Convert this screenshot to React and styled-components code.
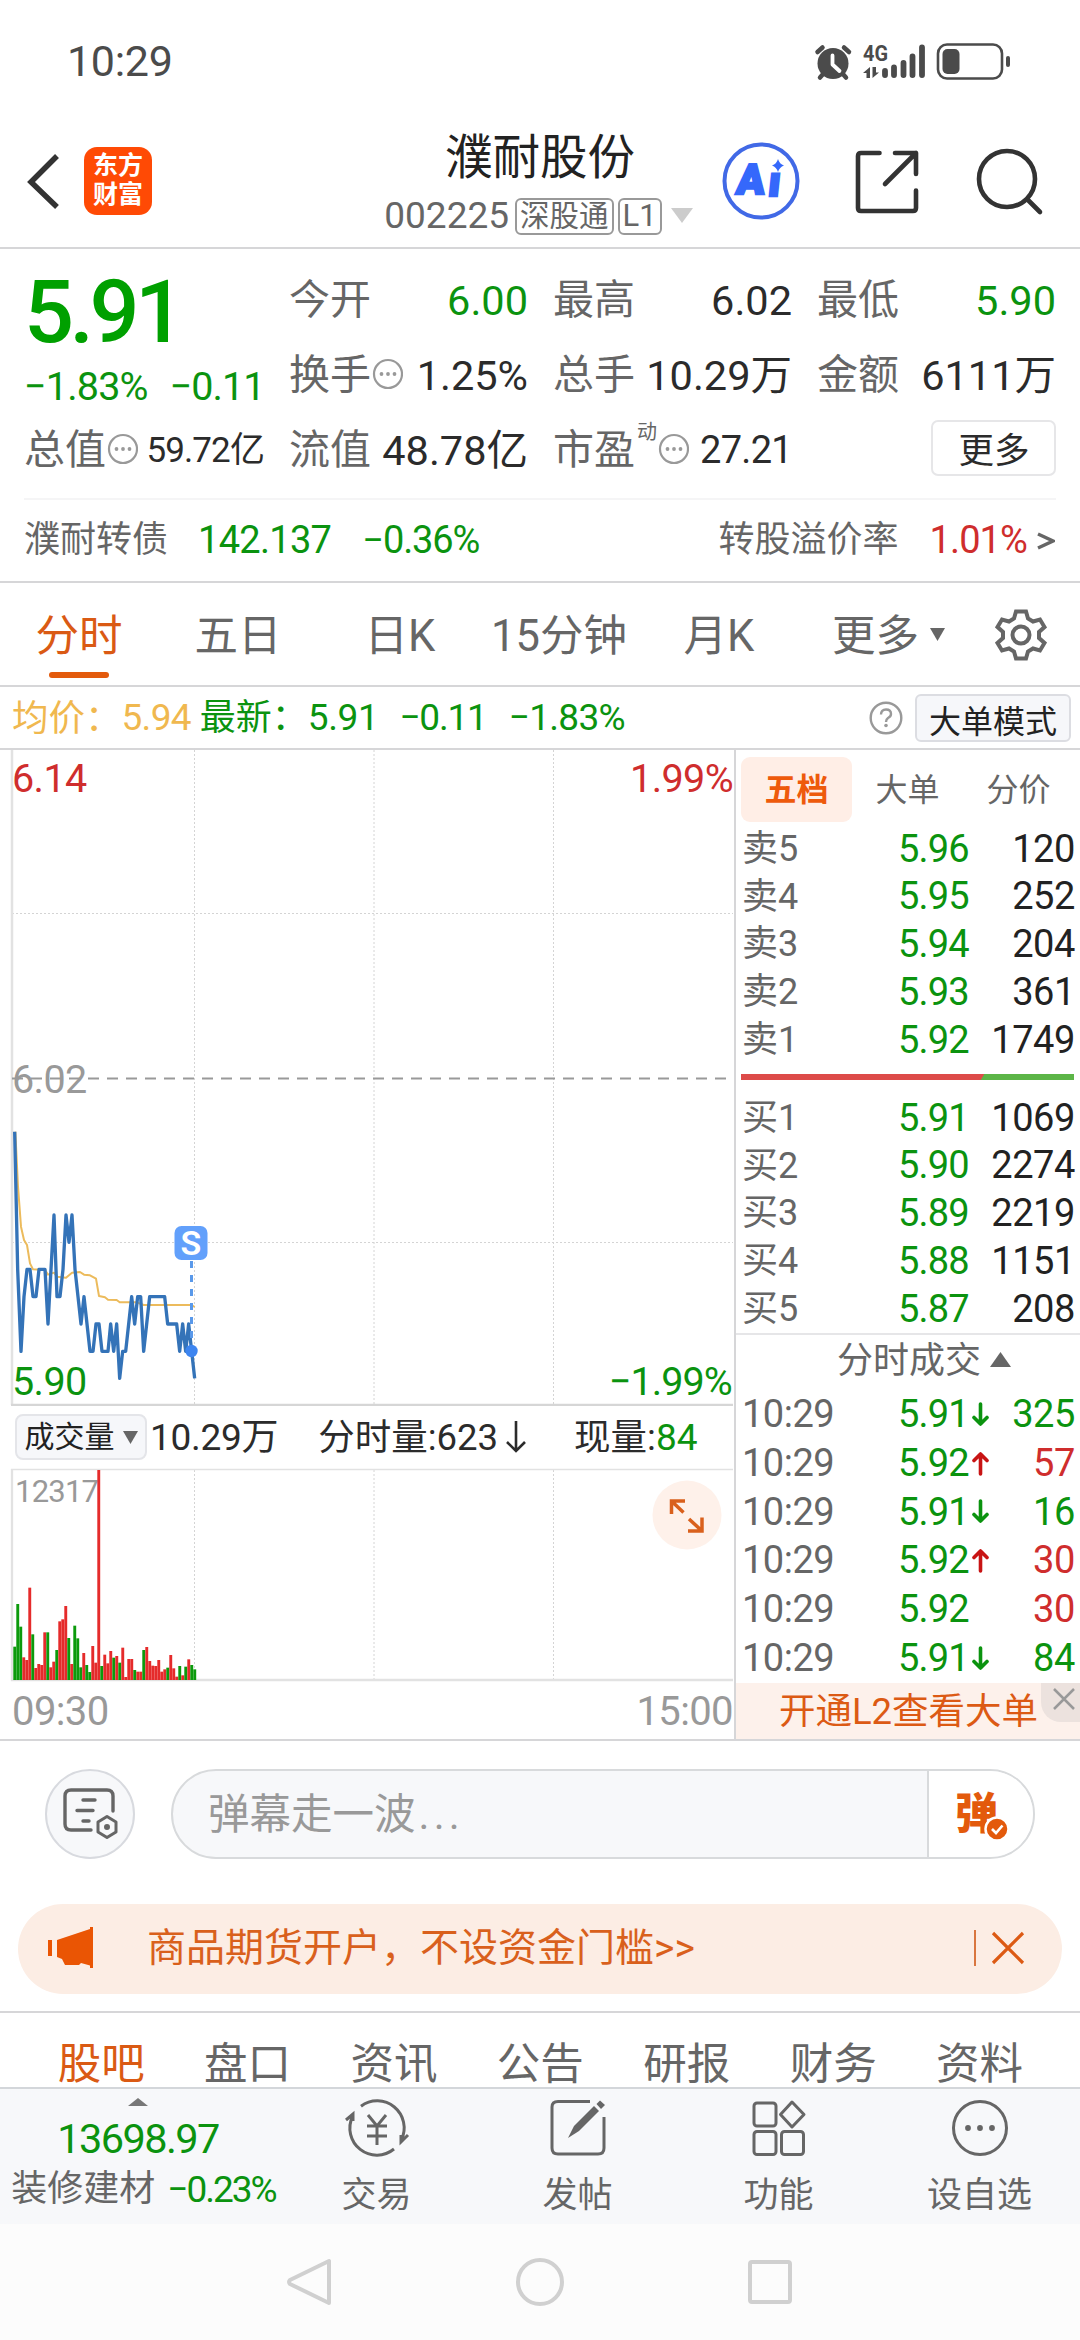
import React from 'react';
import styled, { createGlobalStyle } from 'styled-components';

const GREEN = '#0b930f';
const RED = '#cf2d2d';
const ORANGE = '#e35a0c';
const DARK = '#2b2b2b';
const GRAY = '#666';
const LINE = '#d6d6d8';

const GlobalStyle = createGlobalStyle`
  * { box-sizing: border-box; }
  body {
    margin: 0;
    background: #fff;
    font-family: Roboto, "Noto Sans CJK SC", sans-serif;
    color: ${DARK};
  }
  svg { display: block; flex: none; }
`;

const Page = styled.div`
  width: 1080px;
  height: 2340px;
  display: flex;
  flex-direction: column;
  overflow: hidden;
  background: #fff;
`;

const Txt = styled.span`
  font-size: ${p => p.$size || 38}px;
  color: ${p => p.$color || DARK};
  font-weight: ${p => p.$weight || 400};
  letter-spacing: ${p => p.$ls || 0}px;
  margin-left: ${p => p.$ml || 0}px;
  line-height: 1.2;
  white-space: pre;
`;

/* ---------- status bar ---------- */
const StatusBar = styled.div`
  height: 120px;
  flex: none;
  display: flex;
  justify-content: space-between;
  align-items: center;
  padding: 3px 67px 0 67px;
`;

function StatusIcons() {
  return (
    <svg width="202" height="44" viewBox="810 38 202 44">
      <g stroke="#4b4b4b" strokeWidth="4.500" strokeLinecap="round">
        <path d="M816.500 50l5-4.500M848 50l-5-4.500M823 71l-4 4.500M841 71l4 4.500" />
      </g>
      <circle cx="832" cy="61.500" r="15.500" fill="#4b4b4b" />
      <path d="M831.500 53.500v9l7 6.500" stroke="#fff" strokeWidth="3.800" fill="none" strokeLinecap="round" strokeLinejoin="round" />
      <text x="862" y="59" fontSize="22.500" fontWeight="700" fill="#4b4b4b" textLength="25" lengthAdjust="spacingAndGlyphs">4G</text>
      <path d="M862 71L869 65V76H865.500V71ZM871.500 65H875V70.500H878L871.500 76Z" fill="#4b4b4b" />
      <g stroke="#4b4b4b" strokeWidth="5.800" strokeLinecap="round">
        <path d="M884 69v4M893 65.500v7.500M902.500 61v12M911.500 54.500v18.500M921 45.500v27.500" />
      </g>
      <rect x="937" y="42.500" width="64" height="34" rx="9" fill="none" stroke="#4b4b4b" strokeWidth="2.600" />
      <rect x="941.500" y="47" width="17" height="25" rx="5" fill="#4b4b4b" />
      <rect x="1005" y="54" width="4" height="11" rx="2" fill="#4b4b4b" />
    </svg>
  );
}

/* ---------- header ---------- */
const Header = styled.header`
  height: 129px;
  flex: none;
  display: grid;
  grid-template-columns: 380px 320px 1fr;
  border-bottom: 2px solid ${LINE};
`;
const HeaderLeft = styled.div`
  display: flex;
  align-items: flex-start;
  gap: 23px;
  padding: 27px 0 0 26px;
`;
const Logo = styled.div`
  width: 68px;
  height: 68px;
  border-radius: 13px;
  background: #ff4a05;
  color: #fff;
  font-size: 25px;
  font-weight: 700;
  line-height: 29px;
  text-align: center;
  padding-top: 4px;
`;
const HeaderTitle = styled.div`
  display: flex;
  flex-direction: column;
  align-items: center;
`;
const Name = styled.h1`
  margin: 10px 0 0;
  font-size: 47.500px;
  line-height: 56px;
  font-weight: 400;
  color: #222;
`;
const CodeRow = styled.div`
  display: flex;
  align-items: center;
  height: 38px;
  margin-top: 11px;
`;
const Tag = styled.span`
  height: 37px;
  border: 2px solid #999;
  border-radius: 6px;
  color: ${GRAY};
  font-size: ${p => p.$size}px;
  line-height: 32px;
  padding: 0 3px;
  margin-left: ${p => p.$ml}px;
  white-space: nowrap;
`;
const HeaderRight = styled.div`
  display: flex;
  align-items: center;
  padding: 0 0 5px 22px;
  gap: 54px;
`;

/* ---------- quote ---------- */
const Quote = styled.section`
  height: 334px;
  flex: none;
  padding: 14px 24px 0;
  border-bottom: 2px solid ${LINE};
`;
const QuoteGrid = styled.div`
  display: flex;
  gap: 25px;
  height: 225px;
`;
const PriceCol = styled.div`
  width: 240px;
  flex: none;
`;
const PriceLine = styled.div`
  display: flex;
  align-items: center;
  height: ${p => p.$h}px;
`;
const Stats = styled.div`
  flex: 1;
  display: grid;
  grid-template-columns: repeat(3, 1fr);
  grid-auto-rows: 75px;
  column-gap: 25px;
`;
const Stat = styled.div`
  height: 75px;
  display: flex;
  align-items: center;
  justify-content: space-between;
  white-space: nowrap;
`;
const StatLabel = styled.span`
  display: flex;
  align-items: center;
  font-size: 41px;
  line-height: 1.2;
  color: ${GRAY};
  & > svg { margin-top: -4px; }
`;
const Sup = styled.sup`
  font-size: 20px;
  line-height: 20px;
  align-self: flex-start;
  margin: -4px 0 0 2px;
  width: 20px;
`;
const MoreButton = styled.button`
  justify-self: end;
  width: 125px;
  height: 56px;
  margin-top: 7px;
  border: 2px solid #e6e6e8;
  border-radius: 7px;
  background: #fff;
  padding: 0 0 6px 1px;
  font: 400 35.500px Roboto, "Noto Sans CJK SC", sans-serif;
  color: ${DARK};
`;
const BondRow = styled.div`
  margin-top: 10px;
  height: 84px;
  border-top: 2px solid #f5f5f6;
  display: flex;
  align-items: center;
  padding: 0 1px 1px 0;
`;
const Spacer = styled.div`
  flex: 1;
`;

function Dots() {
  return (
    <svg width="32" height="32" viewBox="0 0 32 32">
      <circle cx="17" cy="16" r="14" fill="none" stroke="#999" strokeWidth="2.200" />
      <g fill="#999">
        <circle cx="10.500" cy="16" r="1.900" />
        <circle cx="17" cy="16" r="1.900" />
        <circle cx="23.500" cy="16" r="1.900" />
      </g>
    </svg>
  );
}

/* ---------- period tabs ---------- */
const PeriodTabs = styled.nav`
  height: 104px;
  flex: none;
  display: grid;
  grid-template-columns: 158px 160px 164px 154px 166px 173px 1fr;
  border-bottom: 2px solid ${LINE};
`;
const Period = styled.div`
  position: relative;
  display: flex;
  align-items: center;
  justify-content: center;
  gap: 11px;
  font-size: 43.500px;
  line-height: 1;
  padding-top: 5px;
  white-space: nowrap;
  color: ${p => (p.$on ? '#da5a14' : GRAY)};
  & > svg { margin-top: -4px; }
  &::after {
    content: '';
    display: ${p => (p.$on ? 'block' : 'none')};
    position: absolute;
    left: 49px;
    bottom: 7px;
    width: 60px;
    height: 6px;
    border-radius: 3px;
    background: ${ORANGE};
  }
`;

/* ---------- info row ---------- */
const InfoRow = styled.div`
  height: 63px;
  flex: none;
  display: flex;
  align-items: center;
  padding: 0 9px 0 12px;
  border-bottom: 2px solid ${LINE};
  & > span { padding-top: 2px; }
`;
const ModeButton = styled.button`
  width: 156px;
  height: 48px;
  margin-left: 12px;
  border: 2px solid #dcdde2;
  border-radius: 6px;
  background: #f6f7fa;
  padding: 0 0 6px;
  font: 400 32px Roboto, "Noto Sans CJK SC", sans-serif;
  color: #222;
`;

/* ---------- chart and book ---------- */
const Market = styled.section`
  height: 991px;
  flex: none;
  display: flex;
  border-bottom: 2px solid ${LINE};
`;
const ChartCol = styled.div`
  width: 734px;
  flex: none;
`;
const VolumeHead = styled.div`
  height: 62px;
  display: flex;
  align-items: center;
  padding-left: 15px;
  & > span { padding-top: 2px; }
`;
const VolumeSelect = styled.div`
  width: 132px;
  height: 46px;
  display: flex;
  align-items: center;
  justify-content: center;
  gap: 8px;
  border: 2px solid #e4e5e9;
  border-radius: 8px;
  background: #f6f7fa;
  font-size: 30px;
  line-height: 1;
  color: #222;
`;
const Book = styled.aside`
  flex: 1;
  border-left: 2px solid ${LINE};
  display: flex;
  flex-direction: column;
`;
const BookTabs = styled.div`
  display: grid;
  grid-template-columns: repeat(3, 111px);
  height: 65px;
  margin: 7px 0 3px 5px;
`;
const BookTab = styled.div`
  display: flex;
  align-items: center;
  justify-content: center;
  border-radius: 9px;
  font-size: 32px;
  line-height: 1;
  padding-top: 1px;
  color: ${p => (p.$on ? '#ee5a0c' : GRAY)};
  font-weight: ${p => (p.$on ? 700 : 400)};
  background: ${p => (p.$on ? '#ffeee6' : 'none')};
`;
const BookRow = styled.div`
  display: grid;
  grid-template-columns: 156px 76px 1fr;
  align-items: center;
  height: ${p => p.$h}px;
  padding: 1px 5px 0 6px;
  & > :last-child { text-align: right; }
`;
const Ratio = styled.div`
  height: 6px;
  margin: ${p => p.$m};
  background: linear-gradient(120deg, #dd4b49 72.200%, #5cb547 72.400%);
`;
const TradesHead = styled.div`
  height: 57px;
  border-top: 2px solid #e6e6e8;
  display: flex;
  align-items: center;
  justify-content: center;
  gap: 9px;
  padding: 0 0 1px 32px;
  & > svg { margin-top: -5px; }
`;
const TickPrice = styled.div`
  display: flex;
  align-items: center;
  gap: 3px;
`;
const L2Banner = styled.div`
  position: relative;
  flex: 1;
  display: flex;
  align-items: center;
  justify-content: center;
  background: #fdf1eb;
  padding: 2px 0 0 1px;
`;
const L2Close = styled.div`
  position: absolute;
  top: 0;
  right: 0;
  width: 39px;
  height: 39px;
  border-bottom-left-radius: 20px;
  background: #ece2de;
  display: flex;
  align-items: center;
  justify-content: center;
  padding: 0 0 7px 6px;
`;

/* ---------- comment, banner ---------- */
const CommentRow = styled.div`
  height: 163px;
  flex: none;
  display: flex;
  padding: 28px 45px 0;
  gap: 36px;
`;
const RoundButton = styled.div`
  width: 90px;
  height: 90px;
  border-radius: 50%;
  border: 2px solid #d8dadf;
  background: #f7f8fa;
  display: flex;
  align-items: center;
  justify-content: center;
`;
const Input = styled.div`
  flex: 1;
  height: 90px;
  display: flex;
  align-items: center;
  border: 2px solid #d8dadc;
  border-radius: 45px;
  background: #f7f8fa;
  overflow: hidden;
  padding-left: 35px;
  & > span { padding-top: 2px; }
`;
const Danmu = styled.div`
  width: 106px;
  height: 100%;
  background: #fff;
  border-left: 2px solid #d8dadc;
  display: flex;
  align-items: center;
  padding-left: 26px;
`;
const Promo = styled.div`
  height: 90px;
  flex: none;
  margin: 0 18px 17px;
  border-radius: 45px;
  background: #fcede4;
  display: flex;
  align-items: center;
  padding: 0 37px 2px 29px;
`;
const Bar = styled.i`
  width: 2px;
  height: 36px;
  background: #d9763f;
  margin-right: 15px;
`;

/* ---------- bottom ---------- */
const Sections = styled.nav`
  height: 78px;
  flex: none;
  display: grid;
  grid-template-columns: repeat(7, 146.400px);
  padding-left: 28px;
  border-top: 2px solid ${LINE};
  border-bottom: 2px solid #d3d6da;
`;
const Section = styled.div`
  text-align: center;
  font-size: 43.500px;
  line-height: 48px;
  padding-top: 28px;
  height: 76px;
  color: ${p => (p.$on ? '#da5a14' : GRAY)};
`;
const Toolbar = styled.div`
  height: 135px;
  flex: none;
  display: grid;
  grid-template-columns: 276px repeat(4, 201px);
  background: #f7f8fa;
`;
const IndexBox = styled.div`
  display: flex;
  flex-direction: column;
  align-items: center;
  padding: 9px 0 0;
`;
const IndexLine = styled.div`
  display: flex;
  align-items: center;
  white-space: nowrap;
  padding-left: ${p => p.$pl || 0}px;
  height: ${p => p.$h}px;
`;
const Tool = styled.div`
  display: flex;
  flex-direction: column;
  align-items: center;
  padding-top: 9px;
  font-size: 35px;
  line-height: 42px;
  color: ${GRAY};
  & > svg { margin-bottom: 17px; }
`;
const NavBar = styled.div`
  flex: 1;
  display: flex;
  justify-content: center;
  gap: 180px;
  padding-top: 32px;
  background: #fcfcfc;
`;

const asks = [['卖5', '5.96', '120'], ['卖4', '5.95', '252'], ['卖3', '5.94', '204'], ['卖2', '5.93', '361'], ['卖1', '5.92', '1749']];
const bids = [['买1', '5.91', '1069'], ['买2', '5.90', '2274'], ['买3', '5.89', '2219'], ['买4', '5.88', '1151'], ['买5', '5.87', '208']];
const ticks = [
  ['5.91', 'down', '325', GREEN],
  ['5.92', 'up', '57', RED],
  ['5.91', 'down', '16', GREEN],
  ['5.92', 'up', '30', RED],
  ['5.92', '', '30', RED],
  ['5.91', 'down', '84', GREEN],
];

// one bar per minute, colour letter followed by height
const volumes = 'G100 G228 G160 R68 R60 R277 G137 R36 R48 R45 R143 G143 R38 R55 G90 R176 R182 R222 G126 R48 G163 G125 G38 R81 G45 G24 R102 R52 R630 G42 R76 R50 R87 G67 R72 G52 R97 R9 R63 R63 G30 R25 R25 G90 R99 R57 R43 R42 R60 R25 R32 G37 R75 R35 R10 G42 R14 G40 R62 G45 G32'
  .split(' ')
  .map(v => ({ up: v[0] === 'R', h: Number(v.slice(1)) / 3 }));

const priceLine = '44,155 53,568 63,814 72,650 81,568 90,568 99,650 108,650 117,568 126,568 135,568 144,732 153,568 162,405 171,650 180,650 189,568 198,405 207,487 216,405 225,568 234,650 243,732 252,650 261,732 270,814 279,814 288,732 297,732 306,814 324,814 332,732 341,814 350,732 359,895 368,814 377,814 386,732 395,650 404,732 413,650 422,650 431,814 440,732 449,650 494,650 503,732 530,732 539,814 548,732 557,814 566,732 575,814 584,895';
const avgLine = '46,155 54,320 63,440 72,480 81,495 90,550 99,568 135,570 144,584 162,578 171,590 198,593 216,578 240,576 252,584 270,586 288,596 297,648 315,652 324,659 350,660 359,667 410,667 431,675 575,675 584,681';

function PriceChart() {
  return (
    <svg width="734" height="656" viewBox="0 750 734 656">
      <g stroke="#d4d4d4" strokeDasharray="2 2" strokeWidth="1">
        <path d="M194.500 750V1405M374 750V1405M553.500 750V1405M12 913.500H733M12 1242.500H733" />
      </g>
      <path d="M12 750V1405" stroke="#e2e2e2" strokeWidth="2.500" />
      <path d="M11 1405H733" stroke="#d6d6d6" strokeWidth="2.500" />
      <path d="M12 1078.500H733" stroke="#999" strokeWidth="2" strokeDasharray="11 8" />
      <g fontSize="39.500" letterSpacing="-0.6">
        <text x="12" y="792" fill={RED}>6.14</text>
        <text x="733" y="792" fill={RED} textAnchor="end">1.99%</text>
        <text x="12" y="1093" fill="#999">6.02</text>
        <text x="12" y="1395" fill={GREEN}>5.90</text>
        <text x="609" y="1395" fill={GREEN} textLength="123">−1.99%</text>
      </g>
      <g transform="translate(0 1080) scale(.33333)" fill="none" strokeLinejoin="round">
        <polyline points={avgLine} stroke="#ecbb5c" strokeWidth="6" />
        <polyline points={priceLine} stroke="#3473b8" strokeWidth="10" />
      </g>
      <path d="M191.500 1261V1350" stroke="#5a99ea" strokeWidth="3" strokeDasharray="7 7" />
      <circle cx="191.500" cy="1351" r="6.200" fill="#3d85f0" />
      <rect x="174.500" y="1226" width="33" height="34" rx="7" fill="#62a0fb" />
      <text x="191" y="1255" fontSize="34" fontWeight="600" fill="#fff" textAnchor="middle">S</text>
    </svg>
  );
}

function VolumeChart() {
  return (
    <svg width="734" height="271" viewBox="0 1468 734 271">
      <g stroke="#d4d4d4" strokeDasharray="2 2" strokeWidth="1">
        <path d="M194.500 1470V1680M374 1470V1680M553.500 1470V1680" />
      </g>
      <path d="M11 1469.500H733" stroke="#e2e2e2" strokeWidth="1.500" />
      <path d="M12 1469V1680H733" stroke="#e2e2e2" strokeWidth="2.300" fill="none" />
      <text x="15" y="1502" fontSize="31" fill="#999" textLength="84">12317</text>
      {volumes.map((v, i) => (
        <rect key={i} x={13.3 + i * 3} y={1680 - v.h} width="2.900" height={v.h} fill={v.up ? '#e52b2b' : '#0c9a0c'} />
      ))}
      <circle cx="687" cy="1515" r="34.500" fill="#fef1ea" />
      <g stroke="#d9601c" strokeWidth="3.500" fill="none">
        <path d="M671.500 1514V1501H685M672 1501.500L683.500 1512.500M688 1531H702V1517.500M689 1519L701.500 1530.500" />
      </g>
      <g fontSize="40" fill="#999" letterSpacing="-0.6">
        <text x="12" y="1725">09:30</text>
        <text x="733" y="1725" textAnchor="end">15:00</text>
      </g>
    </svg>
  );
}

function Arrow({ dir }) {
  if (!dir) return null;
  return (
    <svg width="17" height="26" viewBox="0 0 17 26" fill="none" strokeWidth="3.600" strokeLinecap="round" strokeLinejoin="round"
      stroke={dir === 'up' ? '#c81414' : GREEN}>
      <path d={dir === 'up' ? 'M8.500 23V3M2 9.500L8.500 3L15 9.500' : 'M8.500 2V22M2 15.500L8.500 22L15 15.500'} />
    </svg>
  );
}

function LevelRow({ row }) {
  return (
    <BookRow $h={47.8}>
      <Txt $size={36} $color={GRAY}>{row[0]}</Txt>
      <Txt $color={GREEN} $ls={-0.8}>{row[1]}</Txt>
      <Txt $color="#222" $ls={-0.4}>{row[2]}</Txt>
    </BookRow>
  );
}

export default function App() {
  return (
    <Page>
      <GlobalStyle />
      <StatusBar>
        <Txt $size={43} $color="#4b4b4b" $ls={-0.3}>10:29</Txt>
        <StatusIcons />
      </StatusBar>

      <Header>
        <HeaderLeft>
          <svg width="35" height="68" viewBox="0 0 35 68">
            <path d="M31 9L5 35L31 60" fill="none" stroke="#333" strokeWidth="5.500" />
          </svg>
          <Logo>东方<br />财富</Logo>
        </HeaderLeft>
        <HeaderTitle>
          <Name>濮耐股份</Name>
          <CodeRow>
            <Txt $size={37} $color={GRAY}>002225</Txt>
            <Tag $size={29.5} $ml={6}>深股通</Tag>
            <Tag $size={31} $ml={4}>L1</Tag>
            <svg width="34" height="16" viewBox="-9 0 34 16"><path d="M0 0H22L11 15Z" fill="#ccc" /></svg>
          </CodeRow>
        </HeaderTitle>
        <HeaderRight>
          <svg width="78" height="78" viewBox="0 0 78 78">
            <circle cx="39" cy="39" r="36.500" fill="none" stroke="#4169e6" strokeWidth="4" />
            <g fill="#3568fb" stroke="#3568fb" strokeWidth="2.500" fontSize="42" fontWeight="900" transform="translate(5 0) skewX(-6)">
              <text x="14" y="52" textLength="28" lengthAdjust="spacingAndGlyphs">A</text>
              <text x="46" y="54">ı</text>
            </g>
            <path d="M56 17Q57.500 22 62 23.500Q57.500 25 56 30Q54.500 25 50 23.500Q54.500 22 56 17Z" fill="#3568fb" />
          </svg>
          <svg width="66" height="66" viewBox="0 0 66 66" fill="none" stroke="#333" strokeWidth="4.600" strokeLinecap="round" strokeLinejoin="round">
            <path d="M25.500 5H7Q4 5 4 8V60Q4 63 7 63H59Q62 63 62 60V42.500M41 5H62V26M62 5L31 36" />
          </svg>
          <svg width="70" height="70" viewBox="-1 0 70 70" fill="none" stroke="#333" strokeWidth="4.600" strokeLinecap="round">
            <circle cx="32" cy="33" r="28" />
            <path d="M53 54L65 66" />
          </svg>
        </HeaderRight>
      </Header>

      <Quote>
        <QuoteGrid>
          <PriceCol>
            <PriceLine $h={98}><Txt $size={88} $color="#00a000" $weight={500} $ls={-4.5}>5.91</Txt></PriceLine>
            <PriceLine $h={52}>
              <Txt $size={39.5} $color={GREEN} $ls={-0.8}>−1.83%</Txt>
              <Txt $size={39.5} $color={GREEN} $ls={-1} $ml={22}>−0.11</Txt>
            </PriceLine>
            <Stat>
              <StatLabel>总值<Dots /></StatLabel>
              <Txt $size={35} $ls={-0.9}>59.72亿</Txt>
            </Stat>
          </PriceCol>
          <Stats>
            <Stat><StatLabel>今开</StatLabel><Txt $size={41.5} $color={GREEN}>6.00</Txt></Stat>
            <Stat><StatLabel>最高</StatLabel><Txt $size={41.5}>6.02</Txt></Stat>
            <Stat><StatLabel>最低</StatLabel><Txt $size={41.5} $color={GREEN}>5.90</Txt></Stat>
            <Stat><StatLabel>换手<Dots /></StatLabel><Txt $size={41.5}>1.25%</Txt></Stat>
            <Stat><StatLabel>总手</StatLabel><Txt $size={41.5}>10.29万</Txt></Stat>
            <Stat><StatLabel>金额</StatLabel><Txt $size={41.5}>6111万</Txt></Stat>
            <Stat><StatLabel>流值</StatLabel><Txt $size={41.5}>48.78亿</Txt></Stat>
            <Stat><StatLabel>市盈<Sup>动</Sup><Dots /></StatLabel><Txt $size={38} $ls={-0.7}>27.21</Txt></Stat>
            <MoreButton>更多</MoreButton>
          </Stats>
        </QuoteGrid>
        <BondRow>
          <Txt $size={36} $color={GRAY}>濮耐转债</Txt>
          <Txt $size={38} $color={GREEN} $ml={30} $ls={-0.7}>142.137</Txt>
          <Txt $size={38} $color={GREEN} $ml={31} $ls={-1.1}>−0.36%</Txt>
          <Spacer />
          <Txt $size={36} $color={GRAY}>转股溢价率</Txt>
          <Txt $size={38} $color={RED} $ml={31} $ls={-0.9}>1.01%</Txt>
          <svg width="28" height="28" viewBox="-10 -2 28 28"><path d="M1 5L16 12L1 19" fill="none" stroke={GRAY} strokeWidth="3.400" /></svg>
        </BondRow>
      </Quote>

      <PeriodTabs>
        <Period $on>分时</Period>
        <Period>五日</Period>
        <Period>日K</Period>
        <Period>15分钟</Period>
        <Period>月K</Period>
        <Period>更多<svg width="15" height="13" viewBox="0 0 15 13"><path d="M0 0H15L7.500 13Z" fill={GRAY} /></svg></Period>
        <Period>
          <svg width="66" height="54" viewBox="-26 -27 66 54" fill="none" stroke={GRAY} strokeWidth="4">
            <path d="M-5 -23.500H5L7 -16.500L12 -13.500L19 -15.500L23.500 -8L18 -3V3L23.500 8L19 15.500L12 13.500L7 16.500L5 23.500H-5L-7 16.500L-12 13.500L-19 15.500L-23.500 8L-18 3V-3L-23.500 -8L-19 -15.500L-12 -13.500L-7 -16.500Z" />
            <circle r="8.500" />
          </svg>
        </Period>
      </PeriodTabs>

      <InfoRow>
        <Txt $size={36.5} $color="#f0b84f">均价：</Txt>
        <Txt $size={37} $color="#f0b84f" $ls={-0.7}>5.94</Txt>
        <Txt $size={36} $color={GREEN} $ml={9}>最新：</Txt>
        <Txt $size={37} $color={GREEN} $ls={-0.4}>5.91</Txt>
        <Txt $size={37} $color={GREEN} $ml={21} $ls={-1.2}>−0.11</Txt>
        <Txt $size={37} $color={GREEN} $ml={22} $ls={-0.7}>−1.83%</Txt>
        <Spacer />
        <svg width="34" height="34" viewBox="0 0 34 34">
          <circle cx="17" cy="17" r="15.300" fill="none" stroke="#999" strokeWidth="2.400" />
          <path d="M12 13.500Q12 8.500 17 8.500Q22 8.500 22 13Q22 15.500 19 17Q17 18.500 17 21" fill="none" stroke="#999" strokeWidth="2.400" />
          <circle cx="17" cy="24.500" r="1.800" fill="#999" />
        </svg>
        <ModeButton>大单模式</ModeButton>
      </InfoRow>

      <Market>
        <ChartCol>
          <PriceChart />
          <VolumeHead>
            <VolumeSelect>
              成交量
              <svg width="15" height="13" viewBox="0 0 15 13"><path d="M0 0H15L7.500 13Z" fill={GRAY} /></svg>
            </VolumeSelect>
            <Txt $size={37} $ml={3} $ls={-0.3}>10.29万</Txt>
            <Txt $size={36.5} $ml={40}>分时量:623</Txt>
            <svg width="34" height="34" viewBox="-8 0 34 34" fill="none" stroke={DARK} strokeWidth="2.600">
              <path d="M10 1V31M1 22L10 31L19 22" />
            </svg>
            <Txt $size={36.5} $ml={42}>现量:</Txt>
            <Txt $size={37} $color={GREEN}>84</Txt>
          </VolumeHead>
          <VolumeChart />
        </ChartCol>
        <Book>
          <BookTabs>
            <BookTab $on>五档</BookTab>
            <BookTab>大单</BookTab>
            <BookTab>分价</BookTab>
          </BookTabs>
          {asks.map(r => <LevelRow key={r[0]} row={r} />)}
          <Ratio $m="10px 6px 14px 5px" />
          {bids.map(r => <LevelRow key={r[0]} row={r} />)}
          <TradesHead>
            <Txt $size={36} $color={GRAY}>分时成交</Txt>
            <svg width="21" height="15" viewBox="0 0 21 15"><path d="M10.500 0L21 15H0Z" fill={GRAY} /></svg>
          </TradesHead>
          {ticks.map((t, i) => (
            <BookRow key={i} $h={48.8}>
              <Txt $color={GRAY} $ls={-0.5}>10:29</Txt>
              <TickPrice>
                <Txt $color={GREEN} $ls={-0.8}>{t[0]}</Txt>
                <Arrow dir={t[1]} />
              </TickPrice>
              <Txt $color={t[3]} $ls={-0.4}>{t[2]}</Txt>
            </BookRow>
          ))}
          <L2Banner>
            <Txt $size={36.5} $color="#dc5a14">开通L2查看大单</Txt>
            <L2Close>
              <svg width="22" height="22" viewBox="0 0 22 22"><path d="M1 1L21 21M21 1L1 21" stroke="#999" strokeWidth="2.500" /></svg>
            </L2Close>
          </L2Banner>
        </Book>
      </Market>

      <CommentRow>
        <RoundButton>
          <svg width="56" height="54" viewBox="0 0 56 54" fill="none" stroke={GRAY} strokeWidth="3.400" strokeLinecap="round">
            <path d="M51 24V9Q51 3 45 3H9Q3 3 3 9V37Q3 43 9 43H29" />
            <path d="M21 13H33M15 23.500H31M21 34H27" />
            <path d="M45 29.500L54 35V45L45 50.500L36 45V35Z" strokeLinejoin="round" strokeWidth="3" />
            <circle cx="45" cy="40" r="2" fill={GRAY} strokeWidth="2" />
          </svg>
        </RoundButton>
        <Input>
          <Txt $size={41.5} $color="#999">弹幕走一波</Txt>
          <Txt $size={41.5} $color="#999" $ml={3} $ls={4.2}>...</Txt>
          <Spacer />
          <Danmu>
            <svg width="56" height="56" viewBox="0 0 56 56">
              <text x="0" y="43" fontSize="43" fontWeight="900" fill={ORANGE}>弹</text>
              <circle cx="42" cy="43" r="11.500" fill={ORANGE} stroke="#fff" strokeWidth="2.500" />
              <path d="M37 43L41 47L47.500 39.500" fill="none" stroke="#fff" strokeWidth="2.600" />
            </svg>
          </Danmu>
        </Input>
      </CommentRow>

      <Promo>
        <svg width="48" height="42" viewBox="0 0 48 42" fill="#ea5504">
          <path d="M1 13H5V29H1ZM10 13L43 2V0H46V41H43V38.500L34 36L32 38H18L15 32L10 30Z" />
        </svg>
        <Txt $size={39} $color="#d9601c" $ml={52}>商品期货开户，不设资金门槛&gt;&gt;</Txt>
        <Spacer />
        <Bar />
        <svg width="34" height="34" viewBox="0 0 34 34"><path d="M2 2L32 32M32 2L2 32" stroke="#dc5a14" strokeWidth="3.200" /></svg>
      </Promo>

      <Sections>
        {['股吧', '盘口', '资讯', '公告', '研报', '财务', '资料'].map((s, i) => (
          <Section key={s} $on={i === 0}>{s}</Section>
        ))}
      </Sections>

      <Toolbar>
        <IndexBox>
          <svg width="20" height="8" viewBox="0 0 20 8"><path d="M10 0L20 8H0Z" fill="#777" /></svg>
          <IndexLine $h={66}><Txt $size={41.5} $color={GREEN} $ls={-1.6}>13698.97</Txt></IndexLine>
          <IndexLine $h={36} $pl={11}>
            <Txt $size={36} $color={GRAY}>装修建材</Txt>
            <Txt $size={37} $color={GREEN} $ml={12} $ls={-2}>−0.23%</Txt>
          </IndexLine>
        </IndexBox>
        <Tool>
          <svg width="66" height="60" viewBox="-33 -30 66 60" fill="none" stroke={GRAY} strokeWidth="3">
            <path d="M-16 -21.800A27 27 0 0 1 24.500 11.500M31 7L24 14V7" />
            <path d="M17 21A27 27 0 0 1 -24.500 -11.500M-31 -8L-24 -14V-7" />
            <path d="M-9 -13L0 -2L9 -13M0 -2V17M-10 -2H10M-10 8H10" />
          </svg>
          交易
        </Tool>
        <Tool>
          <svg width="60" height="60" viewBox="0 0 60 60" fill="none" stroke={GRAY} strokeWidth="3">
            <path d="M42 3.500H10Q4 3.500 4 9V50Q4 56 10 56H50Q56 56 56 50V19" />
            <path d="M20 40L26 28L46 8L51 13L31 33Z" fill={GRAY} stroke="none" />
            <path d="M48.500 6L52 2.500L57 7L53 11Z" fill={GRAY} stroke="none" />
          </svg>
          发帖
        </Tool>
        <Tool>
          <svg width="60" height="60" viewBox="0 0 60 60" fill="none" stroke={GRAY} strokeWidth="3" strokeLinejoin="round">
            <rect x="5" y="5" width="22" height="23" rx="3" />
            <rect x="5" y="33.500" width="22" height="23" rx="3" />
            <rect x="32.500" y="33.500" width="22" height="23" rx="3" />
            <path d="M43 4L55 16.500L43 29L31.500 16.500Z" />
          </svg>
          功能
        </Tool>
        <Tool>
          <svg width="60" height="60" viewBox="0 0 60 60">
            <circle cx="30" cy="30" r="26.500" fill="none" stroke={GRAY} strokeWidth="3" />
            <g fill={GRAY}><circle cx="18" cy="30" r="2.900" /><circle cx="30" cy="30" r="2.900" /><circle cx="42" cy="30" r="2.900" /></g>
          </svg>
          设自选
        </Tool>
      </Toolbar>

      <NavBar>
        <svg width="48" height="54" viewBox="0 0 48 54" fill="none" stroke="#d0d0d0" strokeWidth="4" strokeLinejoin="round">
          <path d="M43 5V47L4 28Q2 26 4 24Z" />
        </svg>
        <svg width="52" height="54" viewBox="0 0 52 54" fill="none" stroke="#d0d0d0" strokeWidth="4">
          <circle cx="26" cy="26" r="22" />
        </svg>
        <svg width="48" height="54" viewBox="0 0 48 54" fill="none" stroke="#d0d0d0" strokeWidth="4">
          <rect x="4" y="6" width="40" height="40" rx="2" />
        </svg>
      </NavBar>
    </Page>
  );
}
